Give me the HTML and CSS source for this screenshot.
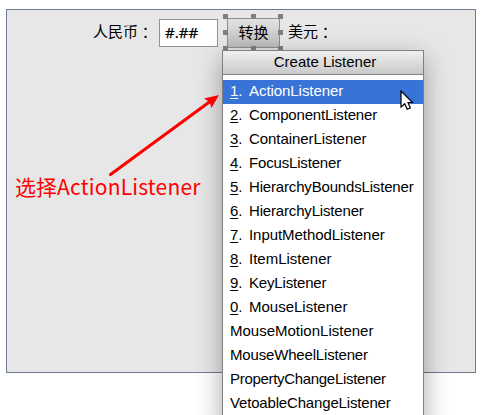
FILE: index.html
```html
<!DOCTYPE html>
<html lang="zh-CN">
<head>
<meta charset="utf-8">
<title>Create Listener</title>
<link rel="stylesheet" href="styles.css">
</head>
<body>
<main class="form">
  <div class="row">
    <label class="label" for="rmb">人民币<span class="colon" lang="zh-TW">：</span></label>
    <input class="field" id="rmb" value="#.##">
    <div class="selection">
      <button class="convert">转换</button>
      <i class="handle tl"></i><i class="handle tc"></i><i class="handle tr"></i>
      <i class="handle ml"></i><i class="handle mr"></i>
      <i class="handle bl"></i><i class="handle bc"></i><i class="handle br"></i>
    </div>
    <span class="label">美元<span class="colon" lang="zh-TW">：</span></span>
  </div>
</main>
<section class="popup">
  <h1 class="title"><span>Create Listener</span></h1>
  <ul class="list">
    <li class="item selected"><span class="num"><u>1</u>.</span><span class="snug">ActionListener</span></li>
    <li class="item"><span class="num"><u>2</u>.</span><span class="tight">ComponentListener</span></li>
    <li class="item"><span class="num"><u>3</u>.</span><span class="snug">ContainerListener</span></li>
    <li class="item"><span class="num"><u>4</u>.</span><span class="tight">FocusListener</span></li>
    <li class="item"><span class="num"><u>5</u>.</span><span class="tight">HierarchyBoundsListener</span></li>
    <li class="item"><span class="num"><u>6</u>.</span><span class="tight">HierarchyListener</span></li>
    <li class="item"><span class="num"><u>7</u>.</span><span class="snug">InputMethodListener</span></li>
    <li class="item"><span class="num"><u>8</u>.</span><span>ItemListener</span></li>
    <li class="item"><span class="num"><u>9</u>.</span><span class="tight">KeyListener</span></li>
    <li class="item"><span class="num"><u>0</u>.</span><span>MouseListener</span></li>
    <li class="item"><span>MouseMotionListener</span></li>
    <li class="item"><span class="tight">MouseWheelListener</span></li>
    <li class="item"><span class="tighter">PropertyChangeListener</span></li>
    <li class="item"><span class="tight">VetoableChangeListener</span></li>
  </ul>
</section>
<p class="note">选择<span class="latin">ActionListener</span></p>
<svg class="arrow" width="120" height="90" viewBox="0 0 120 90">
  <path d="M10.500 84.500L110 11.500" stroke="#f00" stroke-width="3" stroke-linecap="round"/>
  <path d="M119 5L104 8.500L109.500 12L111.500 18Z" fill="#f00"/>
</svg>
<svg class="cursor" width="16" height="22" viewBox="0 0 16 22">
  <path d="M1 1V17L4.700 13.700L7.200 19.300L10.300 18L8 12.500H12.500Z" fill="#fff" stroke="#000" stroke-width="1.200"/>
</svg>
</body>
</html>
```
FILE: styles.css
```css
* { box-sizing: border-box; }
body {
  margin: 0;
  width: 482px;
  height: 415px;
  overflow: hidden;
  position: relative;
  background: #fff;
  color: #000;
  font: 15px "Liberation Sans", "Noto Sans CJK SC", sans-serif;
}
.form {
  width: 470px;
  height: 364px;
  margin: 9px 0 0 6px;
  padding: 9px 0 0 86px;
  border: 1px solid #6d7b8c;
  background: #e7e7e7;
}
.row { display: flex; align-items: center; height: 28px; }
.label { font: 15px/28px "Noto Sans CJK SC", sans-serif; white-space: nowrap; position: relative; top: -2px; }
.colon { font-family: "Noto Sans CJK TC", sans-serif; position: relative; top: 1px; }
.field {
  width: 59px;
  height: 28px;
  margin: 0 9px 0 6px;
  padding: 0 0 2px 5px;
  border: 1px solid #929292;
  background: #fff;
  font: 15px "Noto Sans", sans-serif;
  -webkit-text-stroke: .25px #000;
}
.selection { position: relative; width: 53px; height: 30px; margin-right: 8px; }
.convert {
  display: block;
  width: 53px;
  height: 30px;
  padding: 0 0 3px;
  border: 1px solid #8e8e8e;
  border-radius: 2px;
  background: linear-gradient(#e2e2e2, #bdbdbd);
  font: 15px "Noto Sans CJK SC", sans-serif;
}
.handle { position: absolute; width: 5px; height: 5px; background: #808080; }
.tl, .tc, .tr { top: -4px; }
.ml, .mr { top: 12px; }
.bl, .bc, .br { top: 28px; }
.tl, .ml, .bl { left: -4px; }
.tc, .bc { left: 24px; }
.tr, .mr, .br { left: 51px; }
.popup {
  position: absolute;
  left: 222px;
  top: 50px;
  width: 202px;
  height: 380px;
  border: 1px solid #808080;
  background: #fff;
  box-shadow: 0 8px 24px rgba(0, 0, 0, .34);
}
.title {
  margin: 0;
  height: 24px;
  border-bottom: 1px solid #808080;
  background: linear-gradient(#f0f0f0, #c9c9c9);
  font-size: 15px;
  font-weight: 400;
  line-height: 22px;
  padding-left: 4px;
  text-align: center;
}
.list { margin: 5px 0 0; padding: 0; list-style: none; }
.item { display: flex; height: 24px; padding-left: 7px; line-height: 22px; white-space: nowrap; }
.num { width: 19px; }
.num u { text-underline-offset: 2px; text-decoration-thickness: 1px; }
.snug { letter-spacing: -.06px; }
.tight { letter-spacing: -.17px; }
.tighter { letter-spacing: -.31px; }
.selected { background: #3874d8; color: #fff; }
.note {
  position: absolute;
  left: 15px;
  top: 172px;
  margin: 0;
  color: #f00;
  font: 21px/29px "Noto Sans CJK SC", sans-serif;
  white-space: nowrap;
}
.latin { letter-spacing: .2px; }
.arrow { position: absolute; left: 100px; top: 90px; fill: none; }
.cursor { position: absolute; left: 400px; top: 90px; }
```
